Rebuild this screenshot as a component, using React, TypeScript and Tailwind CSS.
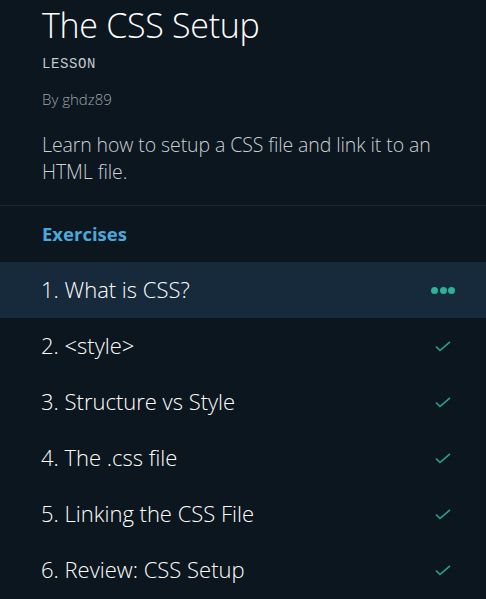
import React from 'react';

const exercises = [
  { n: 1, title: 'What is CSS?', active: true },
  { n: 2, title: '<style>' },
  { n: 3, title: 'Structure vs Style' },
  { n: 4, title: 'The .css file' },
  { n: 5, title: 'Linking the CSS File' },
  { n: 6, title: 'Review: CSS Setup' },
];

function Check() {
  return (
    <svg width="16" height="11" viewBox="0 0 16 11" fill="none" className="mr-[4px]">
      <path d="M1 5.5 L5 9.5 L15 0.8" stroke="#26a591" strokeWidth="1.6" />
    </svg>
  );
}

function Dots() {
  return (
    <div className="flex items-center gap-[1.5px]">
      <span className="w-[7px] h-[7px] rounded-full bg-[#2bb39a]" />
      <span className="w-[7px] h-[7px] rounded-full bg-[#2bb39a]" />
      <span className="w-[7px] h-[7px] rounded-full bg-[#2bb39a]" />
    </div>
  );
}

export default function App() {
  return (
    <div
      className="w-full min-h-screen bg-[#0c161e] text-white overflow-hidden"
      style={{ fontFamily: '"Open Sans", Lato, sans-serif' }}
    >
      {/* header */}
      <div className="px-[42px] pt-[3px] pb-[20px]">
        <h1 className="text-[34px] leading-[44px] font-light tracking-[-0.3px]">The CSS Setup</h1>
        <div className="mt-[9px] text-[14px] leading-[16px] text-[#c3c9cf] tracking-[0.6px]" style={{ fontFamily: '"Liberation Mono", monospace' }}>
          LESSON
        </div>
        <div className="mt-[18px] text-[15px] leading-[18px] text-[#9aa3ab] font-light">By ghdz89</div>
        <p className="mt-[23px] text-[19.5px] leading-[27px] text-[#c9d0d6] font-light tracking-[-0.1px]">
          Learn how to setup a CSS file and link it to an HTML file.
        </p>
      </div>

      <div className="h-px bg-[#1c2a36]" />

      <div className="px-[42px] pt-[16px] pb-[16px] text-[18.5px] leading-[24px] font-bold text-[#4ba8dc]">Exercises</div>

      <ul>
        {exercises.map(ex => (
          <li
            key={ex.n}
            className={
              'h-[56px] flex items-center justify-between pl-[41px] pr-[31px] text-[22px] font-light ' +
              (ex.active ? 'bg-[#172a3b]' : '')
            }
          >
            <span className="-mt-[2px]">{ex.n}. {ex.title}</span>
            {ex.active ? <Dots /> : <Check />}
          </li>
        ))}
      </ul>
    </div>
  );
}
